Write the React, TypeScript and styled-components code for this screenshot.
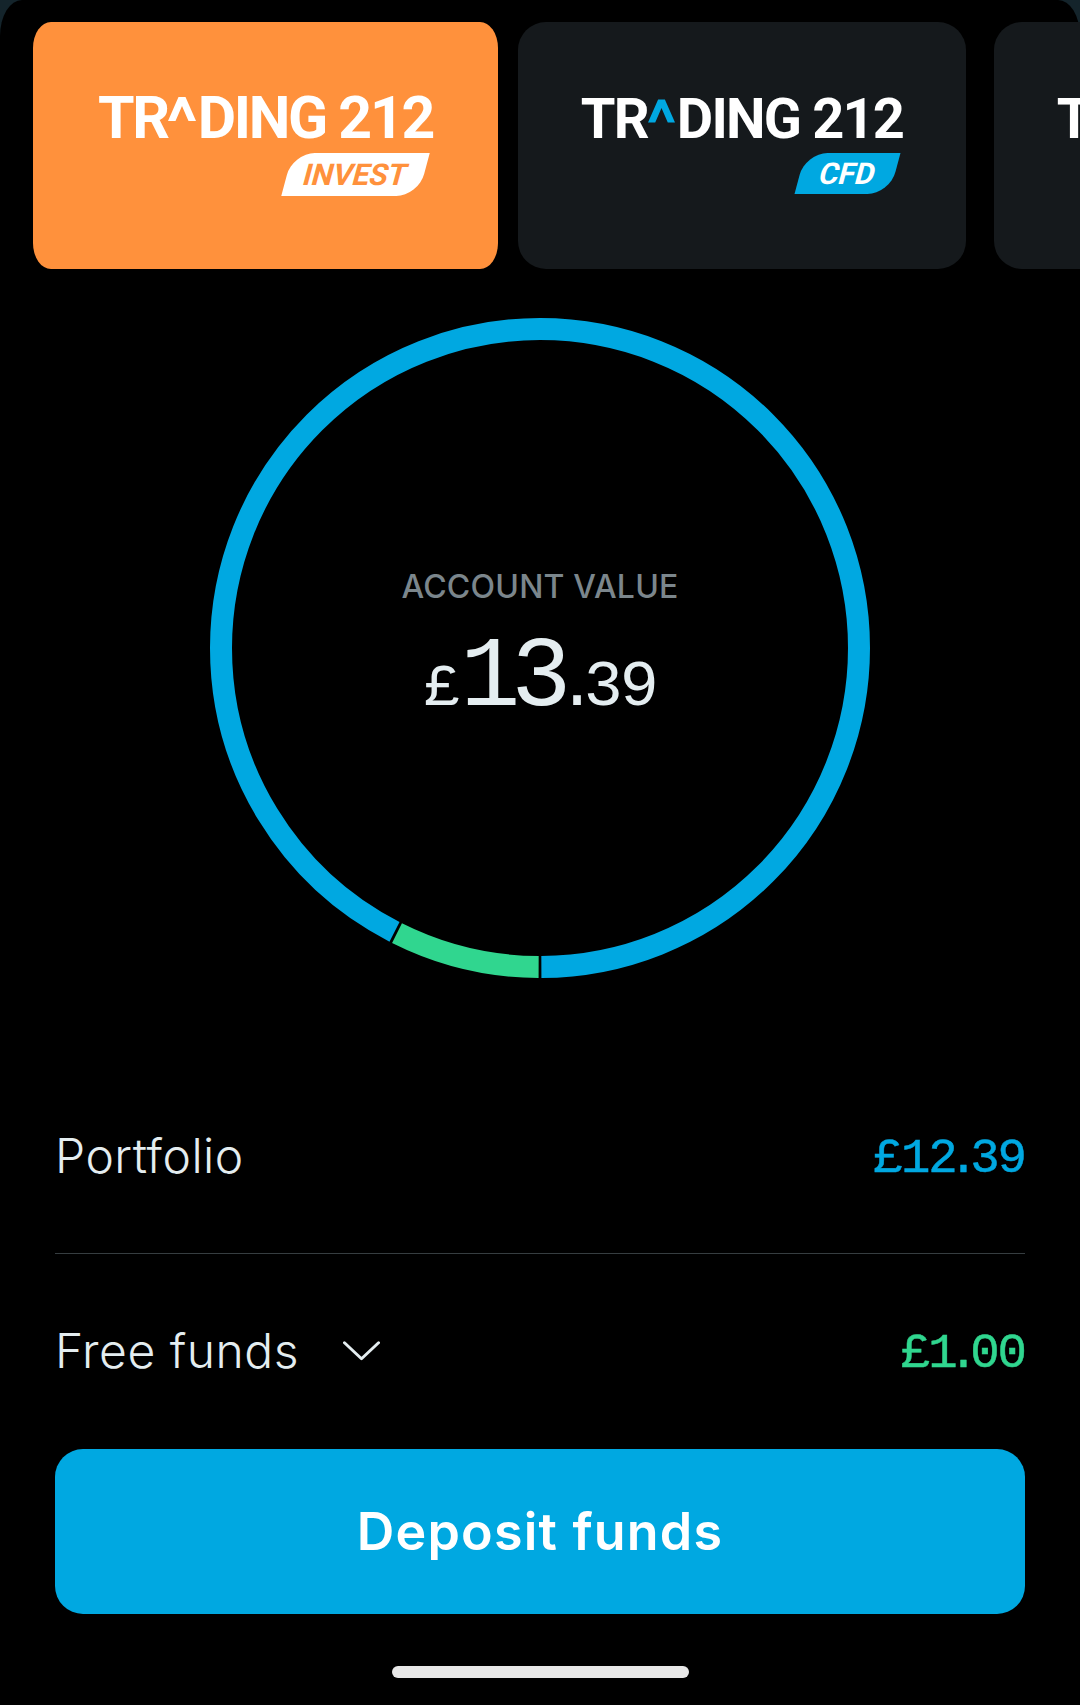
import React from "react";
import styled, { createGlobalStyle } from "styled-components";

const BLUE = "#00a8e1";
const GREEN = "#30d68f";
const portfolio = 12.39;
const free = 1.0;

const App: React.FC = () => {
  const total = portfolio + free;
  const sweep = (360 * free) / total;
  return (
    <>
      <Global />
      <Backdrop>
        <Sheet>
          <Carousel>
            <ProductCard $active>
              <Logo $large>
                <LogoName $large>
                  TR
                  <Caret $large viewBox="0 0 28 24" aria-hidden="true">
                    <path d="M10.5 0h7L28 24h-7.5L14 9 7.5 24H0z" fill="currentColor" />
                  </Caret>
                  DING 212
                </LogoName>
                <Badge $light>
                  <BadgeText>INVEST</BadgeText>
                </Badge>
              </Logo>
            </ProductCard>
            <ProductCard>
              <Logo>
                <LogoName>
                  TR
                  <Caret $blue viewBox="0 0 28 24" aria-hidden="true">
                    <path d="M10.5 0h7L28 24h-7.5L14 9 7.5 24H0z" fill="currentColor" />
                  </Caret>
                  DING 212
                </LogoName>
                <Badge>
                  <BadgeText>CFD</BadgeText>
                </Badge>
              </Logo>
            </ProductCard>
            <ProductCard>
              <Logo>
                <LogoName>
                  TR
                  <Caret viewBox="0 0 28 24" aria-hidden="true">
                    <path d="M10.5 0h7L28 24h-7.5L14 9 7.5 24H0z" fill="currentColor" />
                  </Caret>
                  DING 212
                </LogoName>
              </Logo>
            </ProductCard>
          </Carousel>

          <Gauge>
            <Ring viewBox="0 0 660 660">
              <g transform="rotate(90 330 330)">
                <Arc
                  cx="330"
                  cy="330"
                  r="319"
                  pathLength={360}
                  stroke={GREEN}
                  strokeDasharray={`${sweep - 0.5} 360`}
                  strokeDashoffset={-0.25}
                />
                <Arc
                  cx="330"
                  cy="330"
                  r="319"
                  pathLength={360}
                  stroke={BLUE}
                  strokeDasharray={`${360 - sweep - 0.5} 360`}
                  strokeDashoffset={-(sweep + 0.25)}
                />
              </g>
            </Ring>
            <GaugeLabel>
              <Caption>ACCOUNT VALUE</Caption>
              <Total>
                <Pound>£</Pound>
                <Whole>13</Whole>
                <Dot>.</Dot>
                <Pence>39</Pence>
              </Total>
            </GaugeLabel>
          </Gauge>

          <Details>
            <Row>
              <RowLabel>Portfolio</RowLabel>
              <Amount $color={BLUE}>
                £12<AmountDot>.</AmountDot>39
              </Amount>
            </Row>
            <Divider />
            <Row>
              <RowLabel>
                Free funds
                <Chevron viewBox="0 0 38 20" aria-hidden="true">
                  <path d="M1.5 1.5 19 18 36.5 1.5" />
                </Chevron>
              </RowLabel>
              <Amount $color={GREEN}>
                £1<AmountDot>.</AmountDot>00
              </Amount>
            </Row>
          </Details>

          <Footer>
            <DepositButton>Deposit funds</DepositButton>
            <HomeBar />
          </Footer>
        </Sheet>
      </Backdrop>
    </>
  );
};

const Global = createGlobalStyle`
  html, body {
    margin: 0;
    padding: 0;
    background: #14242b;
  }
  * {
    box-sizing: border-box;
  }
`;
const Backdrop = styled.div`
  width: 1080px;
  height: 1705px;
  overflow: hidden;
  background: #14242b;
`;
const Sheet = styled.div`
  display: flex;
  flex-direction: column;
  height: 1705px;
  padding-top: 22px;
  background: #000;
  border-radius: 22px 22px 0 0 / 36px 36px 0 0;
  font-family: Inter, "Liberation Sans", sans-serif;
  color: #e4edf0;
`;
const Carousel = styled.div`
  display: flex;
  align-items: stretch;
  height: 247px;
  padding-left: 33px;
  overflow: hidden;
`;
const ProductCard = styled.div<{ $active?: boolean }>`
  flex: none;
  display: flex;
  justify-content: center;
  width: ${(p) => (p.$active ? "465px" : "448px")};
  margin-right: ${(p) => (p.$active ? "20px" : "28px")};
  padding-top: ${(p) => (p.$active ? "72px" : "74px")};
  background: ${(p) => (p.$active ? "#ff913c" : "#15191c")};
  border-radius: ${(p) => (p.$active ? "18px / 26px" : "28px")};
`;
const Logo = styled.div<{ $large?: boolean }>`
  display: flex;
  flex-direction: column;
  align-items: flex-end;
  gap: 11px;
  color: #fff;
`;
const LogoName = styled.div<{ $large?: boolean }>`
  display: flex;
  align-items: flex-start;
  font-family: Roboto, "Liberation Sans", sans-serif;
  font-size: ${(p) => (p.$large ? "59px" : "56px")};
  line-height: ${(p) => (p.$large ? "48px" : "46px")};
  height: ${(p) => (p.$large ? "48px" : "46px")};
  font-weight: 700;
  letter-spacing: ${(p) => (p.$large ? "-2.3px" : "-1.8px")};
  white-space: pre;
`;
const Caret = styled.svg<{ $large?: boolean; $blue?: boolean }>`
  flex: none;
  width: ${(p) => (p.$large ? "28px" : "27px")};
  height: 24px;
  margin: 3px 2px 0 0;
  color: ${(p) => (p.$blue ? BLUE : "#fff")};
`;
const Badge = styled.div<{ $light?: boolean }>`
  display: flex;
  align-items: center;
  justify-content: center;
  width: ${(p) => (p.$light ? "137px" : "95px")};
  height: ${(p) => (p.$light ? "43px" : "41px")};
  margin-right: ${(p) => (p.$light ? "9px" : "8px")};
  background: ${(p) => (p.$light ? "#fff" : BLUE)};
  color: ${(p) => (p.$light ? "#ff913c" : "#fff")};
  border-radius: 22px 0 22px 0;
  transform: skewX(-15deg);
`;
const BadgeText = styled.span`
  font-family: Roboto, "Liberation Sans", sans-serif;
  font-size: 30px;
  font-weight: 700;
  line-height: 1;
`;
const Gauge = styled.div`
  position: relative;
  flex: none;
  align-self: center;
  width: 660px;
  height: 660px;
  margin-top: 49px;
`;
const Ring = styled.svg`
  display: block;
  width: 100%;
  height: 100%;
`;
const Arc = styled.circle`
  fill: none;
  stroke-width: 22;
`;
const GaugeLabel = styled.div`
  position: absolute;
  inset: 0;
  display: flex;
  flex-direction: column;
  align-items: center;
  padding-top: 249px;
`;
const Caption = styled.div`
  font-size: 32px;
  font-weight: 500;
  line-height: 40px;
  color: #7b868c;
  letter-spacing: 0.2px;
`;
const Total = styled.div`
  display: flex;
  align-items: baseline;
  margin-top: 22px;
  font-family: "Liberation Mono", monospace;
  line-height: 100px;
`;
const Pound = styled.span`
  font-size: 60px;
  letter-spacing: -6px;
  margin-right: 6px;
`;
const Whole = styled.span`
  font-size: 100px;
  letter-spacing: -9px;
`;
const Dot = styled.span`
  font-size: 66px;
  margin: 0 -13px 0 -5px;
`;
const Pence = styled.span`
  font-size: 65px;
  letter-spacing: -3px;
`;
const Details = styled.div`
  display: flex;
  flex-direction: column;
  margin-top: 81px;
  padding: 0 55px;
`;
const Row = styled.div`
  display: flex;
  align-items: center;
  justify-content: space-between;
  height: 194px;
`;
const RowLabel = styled.div`
  display: flex;
  align-items: center;
  gap: 44px;
  font-size: 48px;
  font-weight: 300;
  line-height: 56px;
  letter-spacing: 0.5px;
`;
const Chevron = styled.svg`
  width: 37px;
  height: 20px;
  fill: none;
  stroke: currentColor;
  stroke-width: 3;
  stroke-linecap: round;
  stroke-linejoin: round;
`;
const Amount = styled.div<{ $color: string }>`
  padding-top: 5px;
  color: ${(p) => p.$color};
  font-family: "Liberation Mono", monospace;
  font-size: 49px;
  line-height: 56px;
  letter-spacing: -2px;
  -webkit-text-stroke: 0.5px ${(p) => p.$color};
`;
const AmountDot = styled.span`
  margin: 0 -6px 0 -7px;
`;
const Divider = styled.div`
  height: 1px;
  background: #363d40;
`;
const Footer = styled.div`
  display: flex;
  flex-direction: column;
  align-items: center;
  margin-top: 1px;
  padding: 0 55px;
`;
const DepositButton = styled.button`
  width: 100%;
  height: 165px;
  border: 0;
  border-radius: 28px;
  background: ${BLUE};
  color: #fff;
  font-family: Inter, "Liberation Sans", sans-serif;
  font-size: 52px;
  font-weight: 600;
  letter-spacing: 1.2px;
`;
const HomeBar = styled.div`
  width: 297px;
  height: 12px;
  margin-top: 52px;
  border-radius: 6px;
  background: #e8e8e8;
`;

export default App;
